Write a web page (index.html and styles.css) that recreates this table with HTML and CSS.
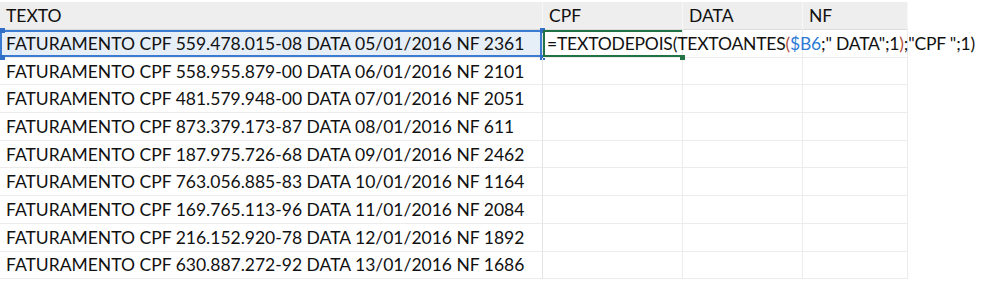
FILE: index.html
```html
<!DOCTYPE html>
<html lang="pt">
<head>
<meta charset="utf-8">
<link rel="stylesheet" href="styles.css">
</head>
<body>
<div class="sheet">
  <div class="hdr">TEXTO</div>
  <div class="hdr">CPF</div>
  <div class="hdr">DATA</div>
  <div class="hdr">NF</div>

  <div class="cell a sel">FATURAMENTO CPF 559.478.015-08 DATA 05/01/2016 NF 2361<i class="h tl"></i><i class="h bl"></i><i class="h tr"></i><i class="h br"></i></div>
  <div class="cell edit"><span class="f">=TEXTODEPOIS(TEXTOANTES<span class="p">(</span><span class="r">$B6</span>;" DATA";1<span class="p">)</span>;"CPF ";1)</span><i class="g"></i></div>
  <div class="cell"></div>
  <div class="cell"></div>

  <div class="cell a">FATURAMENTO CPF 558.955.879-00 DATA 06/01/2016 NF 2101</div><div class="cell"></div><div class="cell"></div><div class="cell"></div>
  <div class="cell a">FATURAMENTO CPF 481.579.948-00 DATA 07/01/2016 NF 2051</div><div class="cell"></div><div class="cell"></div><div class="cell"></div>
  <div class="cell a">FATURAMENTO CPF 873.379.173-87 DATA 08/01/2016 NF 611</div><div class="cell"></div><div class="cell"></div><div class="cell"></div>
  <div class="cell a">FATURAMENTO CPF 187.975.726-68 DATA 09/01/2016 NF 2462</div><div class="cell"></div><div class="cell"></div><div class="cell"></div>
  <div class="cell a">FATURAMENTO CPF 763.056.885-83 DATA 10/01/2016 NF 1164</div><div class="cell"></div><div class="cell"></div><div class="cell"></div>
  <div class="cell a">FATURAMENTO CPF 169.765.113-96 DATA 11/01/2016 NF 2084</div><div class="cell"></div><div class="cell"></div><div class="cell"></div>
  <div class="cell a">FATURAMENTO CPF 216.152.920-78 DATA 12/01/2016 NF 1892</div><div class="cell"></div><div class="cell"></div><div class="cell"></div>
  <div class="cell a">FATURAMENTO CPF 630.887.272-92 DATA 13/01/2016 NF 1686</div><div class="cell"></div><div class="cell"></div><div class="cell"></div>
</div>
</body>
</html>
```

FILE: styles.css
```css
html, body {
  margin: 0;
  padding: 0;
  background: #ffffff;
}
.sheet {
  display: grid;
  grid-template-columns: 543px 140px 120px 105px;
  grid-template-rows: 28px;
  grid-auto-rows: 27.7px;
  margin-top: 2px;
  width: 908px;
  font-family: Lato, "Liberation Sans", sans-serif;
  font-size: 17.5px;
  color: #111111;
}
.hdr {
  background: #eeeeee;
  border-right: 1px solid #f7f7f7;
  border-bottom: 1px solid #dcdcdc;
  padding-left: 6px;
  display: flex;
  align-items: center;
  white-space: nowrap;
}
.cell {
  position: relative;
  border-right: 1px solid #ececec;
  border-bottom: 1px solid #ececec;
  padding-left: 6px;
  display: flex;
  align-items: center;
  white-space: nowrap;
}
.a {
  border-right: 1px solid #e4e4e4;
}
.sel {
  background: #e6eef8;
  box-shadow: inset 0 0 0 2px #3b7bd1;
}
.h {
  position: absolute;
  width: 5px;
  height: 5px;
  background: #2f6fc7;
}
.tl { left: 0; top: -2px; }
.bl { left: 0; bottom: -3px; }
.tr { right: -3px; top: -2px; }
.br { right: -3px; bottom: -3px; }
.edit {
  box-shadow: inset 2px 0 0 #217346, inset 0 2px 0 #217346, inset 0 -2px 0 #217346;
  overflow: visible;
  z-index: 2;
  padding-left: 4px;
}
.f {
  position: relative;
  z-index: 3;
  letter-spacing: -0.2px;
  padding-right: 4px;
}
.p { color: #b0503a; }
.r { color: #2e7bd6; }
.g {
  position: absolute;
  right: -3px;
  bottom: -3px;
  width: 5px;
  height: 5px;
  background: #217346;
}
```
